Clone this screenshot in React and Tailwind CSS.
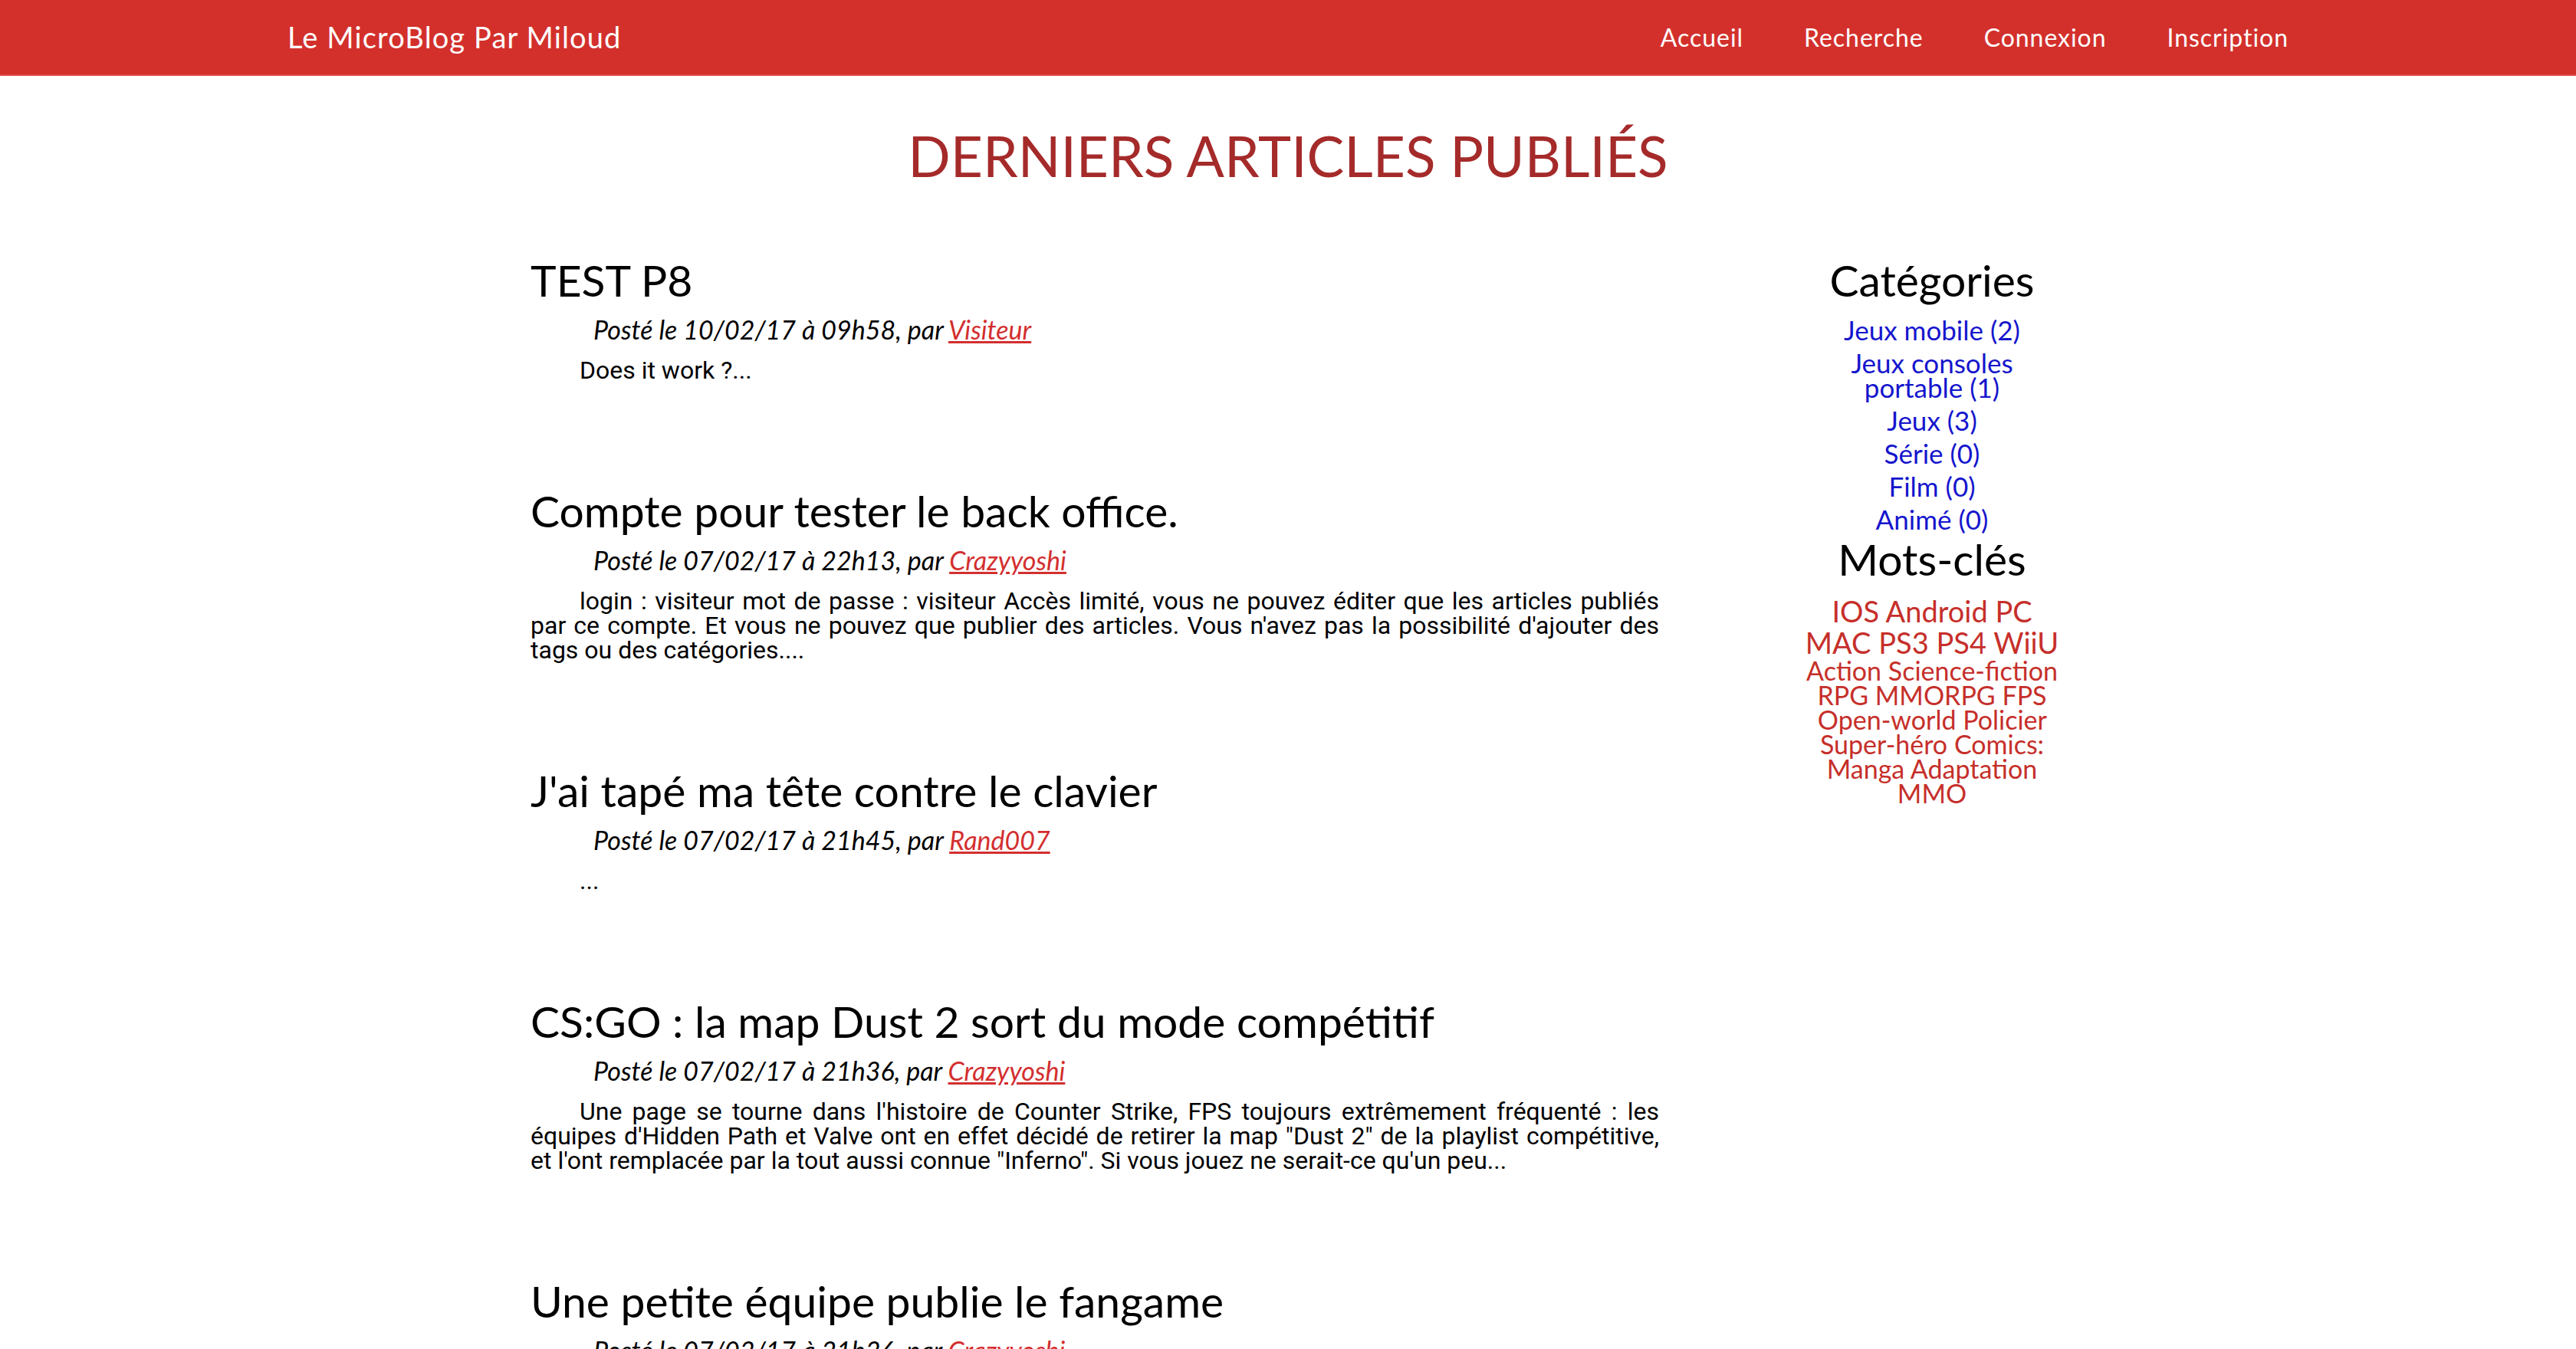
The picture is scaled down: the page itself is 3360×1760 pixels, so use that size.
const articles = [
  {
    title: 'TEST P8',
    date: '10/02/17 à 09h58',
    author: 'Visiteur',
    body: 'Does it work ?...',
  },
  {
    title: 'Compte pour tester le back office.',
    date: '07/02/17 à 22h13',
    author: 'Crazyyoshi',
    body: "login : visiteur mot de passe : visiteur Accès limité, vous ne pouvez éditer que les articles publiés par ce compte. Et vous ne pouvez que publier des articles. Vous n'avez pas la possibilité d'ajouter des tags ou des catégories....",
  },
  {
    title: "J'ai tapé ma tête contre le clavier",
    date: '07/02/17 à 21h45',
    author: 'Rand007',
    body: '...',
  },
  {
    title: 'CS:GO : la map Dust 2 sort du mode compétitif',
    date: '07/02/17 à 21h36',
    author: 'Crazyyoshi',
    body: 'Une page se tourne dans l\'histoire de Counter Strike, FPS toujours extrêmement fréquenté : les équipes d\'Hidden Path et Valve ont en effet décidé de retirer la map "Dust 2" de la playlist compétitive, et l\'ont remplacée par la tout aussi connue "Inferno". Si vous jouez ne serait-ce qu\'un peu...',
  },
  {
    title: 'Une petite équipe publie le fangame',
    date: '07/02/17 à 21h26',
    author: 'Crazyyoshi',
    body: '...',
  },
];

const categories = [
  'Jeux mobile (2)',
  'Jeux consoles portable (1)',
  'Jeux (3)',
  'Série (0)',
  'Film (0)',
  'Animé (0)',
];

const bigTags = ['IOS', 'Android', 'PC', 'MAC', 'PS3', 'PS4', 'WiiU'];
const tags = ['Action', 'Science-fiction', 'RPG', 'MMORPG', 'FPS', 'Open-world', 'Policier', 'Super-héro', 'Comics: Manga', 'Adaptation', 'MMO'];

const Navbar = () => (
  <nav className="h-[99px] bg-[#d3302c] border-b-2 border-[#e04a44]">
    <div className="w-[2640px] mx-auto h-full flex items-center justify-between px-[15px]">
      <a className="text-white text-[38px] tracking-[0.03em]">Le MicroBlog Par Miloud</a>
      <ul className="flex gap-[79px] text-white text-[32px] tracking-[0.03em]">
        <li>Accueil</li>
        <li>Recherche</li>
        <li>Connexion</li>
        <li>Inscription</li>
      </ul>
    </div>
  </nav>
);

const Article = ({ article }) => (
  <article className="mb-[131px]">
    <h2 className="text-[57px] leading-[72px] text-black">{article.title}</h2>
    <p className="mt-[9px] pl-[82px] text-[34px] leading-[40px] italic text-black">
      Posté le {article.date}, par{' '}
      <a className="text-[#d32f2f] underline">{article.author}</a>
    </p>
    <p className="mt-[17px] text-[32px] leading-[32px] text-black text-justify indent-[64px] font-['Roboto',sans-serif]">
      {article.body}
    </p>
  </article>
);

export default function App() {
  return (
    <div className="min-h-screen bg-white font-['Lato',sans-serif]">
      <Navbar />
      <h1 className="mt-[56px] text-center text-[73px] leading-[96px] text-[#a52a2a]">
        DERNIERS ARTICLES PUBLIÉS
      </h1>
      <div className="flex mt-[78px]">
        <main className="ml-[692px] w-[1472px]">
          {articles.map((a) => (
            <Article key={a.title} article={a} />
          ))}
        </main>
        <aside className="ml-[186px] w-[340px] text-center">
          <h2 className="text-[57px] leading-[72px] text-black">Catégories</h2>
          <ul className="mt-[13px] flex flex-col gap-[11px]">
            {categories.map((c) => (
              <li key={c} className="text-[35px] leading-[32px] text-[#1515cd]">{c}</li>
            ))}
          </ul>
          <h2 className="mt-[0px] text-[57px] leading-[72px] text-black">Mots-clés</h2>
          <div className="mt-[12px] text-[34px] leading-[32px] text-[#c62f2a]">
            {bigTags.map((t) => (
              <span key={t} className="text-[38px] leading-[41px]">{t} </span>
            ))}
            {tags.map((t) => (
              <span key={t}>{t} </span>
            ))}
          </div>
        </aside>
      </div>
    </div>
  );
}
